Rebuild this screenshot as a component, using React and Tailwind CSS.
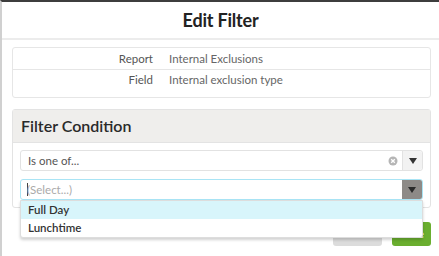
export default function App() {
  const font = { fontFamily: 'Lato, "Open Sans", sans-serif' }

  return (
    <div
      className="w-[439px] h-[256px] overflow-hidden bg-white border-t-2 border-l-2 border-t-[#3d3d3d] border-l-[#d0d0d0] relative"
      style={font}
    >
      {/* Header */}
      <div className="h-[38px] flex items-center justify-center border-b-2 border-[#ececec]">
        <h1 className="text-[18px] font-bold text-[#222] tracking-[-0.2px]">Edit Filter</h1>
      </div>

      <div className="pl-[10px] pr-[8px] pt-[7px]">
        {/* Info table */}
        <div className="border border-[#e6e6e6] rounded-[3px] h-[51px]">
          <div className="flex items-center h-[22px] border-b border-[#e6e6e6] text-[11.5px]">
            <div className="w-[140px] text-right text-[#555]">Report</div>
            <div className="pl-[16px] text-[#666]">Internal Exclusions</div>
          </div>
          <div className="flex items-center h-[20px] text-[11.5px]">
            <div className="w-[140px] text-right text-[#555]">Field</div>
            <div className="pl-[16px] text-[#666]">Internal exclusion type</div>
          </div>
        </div>

        {/* Filter condition panel */}
        <div className="mt-[11px] border border-[#e3e3e3] rounded-[3px] relative">
          <div className="h-[33px] bg-[#efeeec] border-b border-[#e3e3e3] flex items-center pl-[8px]">
            <h2 className="text-[16px] font-semibold text-[#2a2a2a]">Filter Condition</h2>
          </div>
          <div className="p-[7px] flex flex-col gap-[8px]">
            <div className="h-[21px] flex border border-[#e2e2e2] rounded-[3px] bg-white">
              <div className="flex-1 flex items-center pl-[7px] text-[11.5px] text-[#555]">Is one of...</div>
              <div className="w-[18px] flex items-center justify-center">
                <svg width="10" height="10" viewBox="0 0 10 10">
                  <circle cx="5" cy="5" r="4.5" fill="#b5b5b5" />
                  <path d="M3.2 3.2L6.8 6.8M6.8 3.2L3.2 6.8" stroke="#fff" strokeWidth="1.3" />
                </svg>
              </div>
              <div className="w-[20px] border-l border-[#e2e2e2] bg-[#f2f2f2] flex items-center justify-center rounded-r-[3px]">
                <svg width="8" height="6" viewBox="0 0 8 6">
                  <path d="M0 0H8L4 6Z" fill="#333" />
                </svg>
              </div>
            </div>
            <div className="h-[21px] flex border border-[#a9e4f5] rounded-[3px] bg-white">
              <div className="flex-1 flex items-center pl-[6px] text-[11.5px] text-[#aaa]">
                <span className="w-px h-[13px] bg-[#444] mr-[-1px]" />
                (Select...)
              </div>
              <div className="w-[20px] bg-[#8d8a87] flex items-center justify-center rounded-r-[2px]">
                <svg width="8" height="6" viewBox="0 0 8 6">
                  <path d="M0 0H8L4 6Z" fill="#2a2a2a" />
                </svg>
              </div>
            </div>
          </div>

          {/* Dropdown */}
          <div className="absolute left-[7px] right-[7px] top-[90px] bg-white border border-[#ddd] rounded-b-[3px] shadow-[0_2px_3px_rgba(0,0,0,0.18)] z-10 text-[11.5px] font-semibold text-[#333]">
            <div className="h-[18px] flex items-center pl-[7px] bg-[#d8f5fb]">Full Day</div>
            <div className="h-[18px] flex items-center pl-[7px]">Lunchtime</div>
          </div>
        </div>

        {/* Buttons */}
        <div className="flex justify-end gap-[10px] mt-[14px]">
          <button className="h-[24px] w-[49px] rounded-[3px] bg-[#dcdcdc] text-[12px] font-bold text-[#777]">Cancel</button>
          <button className="h-[24px] w-[39px] rounded-[3px] bg-[#6aae2f] text-[12px] font-bold text-white">Save</button>
        </div>
      </div>
    </div>
  )
}
